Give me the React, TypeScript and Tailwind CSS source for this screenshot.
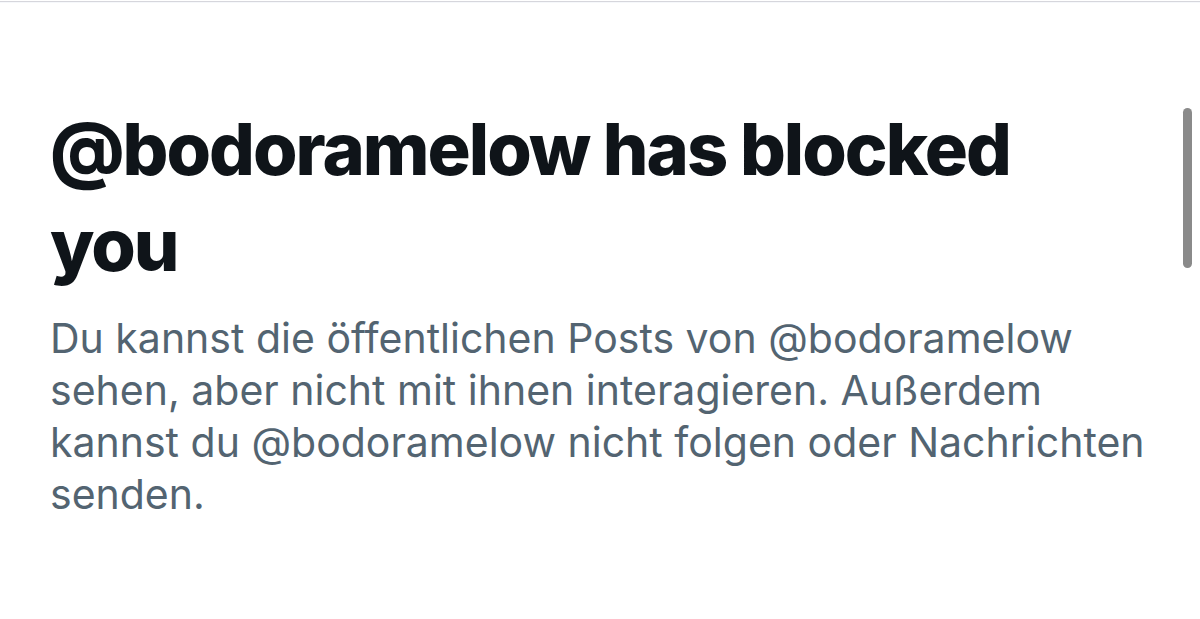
const App = () => {
  return (
    <div className="relative w-[1200px] h-[619px] bg-white overflow-hidden font-['Inter','Liberation_Sans',sans-serif]">
      <div className="h-[1px] mt-[1px] bg-[#d6d6dc]" />
      <div className="h-[1px] bg-[#f6f8fb]" />

      <main className="pl-[50px] pt-[98px]">
        <h1 className="text-[72px] leading-[96px] font-extrabold tracking-[-2px] text-[#0f1419]">
          @bodoramelow has blocked
          <br />
          you
        </h1>
        <p className="mt-[19px] text-[41px] leading-[52px] text-[#536471] whitespace-nowrap">
          Du kannst die öffentlichen Posts von @bodoramelow
          <br />
          sehen, aber nicht mit ihnen interagieren. Außerdem
          <br />
          kannst du @bodoramelow nicht folgen oder Nachrichten
          <br />
          senden.
        </p>
      </main>

      {/* scroll indicator */}
      <div className="absolute left-[1183px] top-[108px] w-[9px] h-[160px] rounded-full bg-[#8a8a8a]" />
    </div>
  );
};

export default App;
